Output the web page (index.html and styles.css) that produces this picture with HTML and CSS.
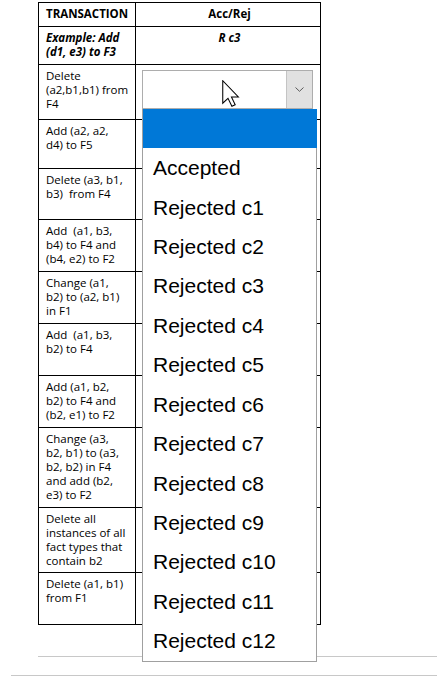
FILE: index.html
```html
<!DOCTYPE html>
<html>
<head>
<meta charset="utf-8">
<link rel="stylesheet" href="styles.css">
</head>
<body>
<div class="page">
  <table class="grid">
    <colgroup><col class="c1"><col class="c2"></colgroup>
    <tr class="r-head"><th class="tl">TRANSACTION</th><th>Acc/Rej</th></tr>
    <tr class="r-ex"><td class="ex">Example: Add<br>(d1, e3) to F3</td><td class="ex center">R c3</td></tr>
    <tr class="r1"><td>Delete<br>(a2,b1,b1) from<br>F4</td><td></td></tr>
    <tr class="r2"><td>Add (a2, a2,<br>d4) to F5</td><td></td></tr>
    <tr class="r3"><td>Delete (a3, b1,<br>b3)&nbsp; from F4</td><td></td></tr>
    <tr class="r4"><td>Add&nbsp; (a1, b3,<br>b4) to F4 and<br>(b4, e2) to F2</td><td></td></tr>
    <tr class="r5"><td>Change (a1,<br>b2) to (a2, b1)<br>in F1</td><td></td></tr>
    <tr class="r6"><td>Add&nbsp; (a1, b3,<br>b2) to F4</td><td></td></tr>
    <tr class="r7"><td>Add (a1, b2,<br>b2) to F4 and<br>(b2, e1) to F2</td><td></td></tr>
    <tr class="r8"><td>Change (a3,<br>b2, b1) to (a3,<br>b2, b2) in F4<br>and add (b2,<br>e3) to F2</td><td></td></tr>
    <tr class="r9"><td>Delete all<br>instances of all<br>fact types that<br>contain b2</td><td></td></tr>
    <tr class="r10"><td>Delete (a1, b1)<br>from F1</td><td></td></tr>
  </table>
  <div class="rule rule-a"></div>
  <div class="rule rule-b"></div>

  <div class="select">
    <div class="select-btn">
      <svg width="9" height="5" viewBox="0 0 9 5"><path d="M0.5 0.5 L4.5 4.3 L8.5 0.5" fill="none" stroke="#5a5a5a" stroke-width="1"/></svg>
    </div>
  </div>

  <ul class="dropdown">
    <li class="sel"></li>
    <li>Accepted</li>
    <li>Rejected c1</li>
    <li>Rejected c2</li>
    <li>Rejected c3</li>
    <li>Rejected c4</li>
    <li>Rejected c5</li>
    <li>Rejected c6</li>
    <li>Rejected c7</li>
    <li>Rejected c8</li>
    <li>Rejected c9</li>
    <li>Rejected c10</li>
    <li>Rejected c11</li>
    <li>Rejected c12</li>
  </ul>

  <svg class="cursor" width="18" height="27" viewBox="0 0 12 18">
    <path d="M0.5 0.5 L0.5 15.5 L4 12.2 L6.6 17.5 L8.8 16.5 L6.3 11.3 L10.9 11.3 Z" fill="#fff" stroke="#000" stroke-width="0.7" stroke-linejoin="miter"/>
  </svg>
</div>
</body>
</html>
```

FILE: styles.css
```css
html, body {
  margin: 0;
  padding: 0;
  background: #fff;
}
.page {
  position: relative;
  width: 437px;
  height: 676px;
  overflow: hidden;
  font-family: "Open Sans", "DejaVu Sans", sans-serif;
  color: #000;
}
.grid {
  border-collapse: collapse;
  table-layout: fixed;
  width: 282px;
  margin: 2px 0 0 38px;
  font-size: 11.5px;
  line-height: 14px;
}
.c1 { width: 97px; }
.c2 { width: 185px; }
.grid th, .grid td {
  border: 1px solid #000;
  padding: 4px 4px 4px 7px;
  vertical-align: top;
  text-align: left;
  font-weight: normal;
  white-space: nowrap;
}
.grid th {
  font-weight: bold;
  text-align: center;
}
.grid th.tl { text-align: left; }
.grid td.ex {
  font-weight: bold;
  font-style: italic;
}
.grid td.center { text-align: center; }

.r-head th { height: 15px; }
.r-ex td { height: 29px; }
.r1 td { height: 46px; }
.r2 td { height: 40px; }
.r3 td { height: 42px; }
.r4 td, .r5 td, .r6 td, .r7 td, .r10 td { height: 43px; }
.r8 td { height: 71px; }
.r9 td { height: 56px; }

.rule {
  height: 1px;
  background: #c8c8c8;
}
.rule-a { margin: 31px 0 0 38px; }
.rule-b { margin: 18px 0 0 11px; }

.select {
  position: absolute;
  left: 142px;
  top: 70px;
  width: 171px;
  height: 39px;
  box-sizing: border-box;
  border: 1px solid #adadad;
  background: #fff;
  display: flex;
  justify-content: flex-end;
}
.select-btn {
  width: 25px;
  background: #e1e1e1;
  border-left: 1px solid #c4c4c4;
  display: flex;
  align-items: center;
  justify-content: center;
}

.dropdown {
  position: absolute;
  left: 142px;
  top: 109px;
  width: 175px;
  height: 553px;
  box-sizing: border-box;
  margin: 0;
  padding: 0;
  list-style: none;
  background: #fff;
  border: 1px solid #a0a0a0;
  border-top: none;
  display: flex;
  flex-direction: column;
  font-family: "Liberation Sans", Arial, sans-serif;
  font-size: 21px;
  color: #000;
}
.dropdown li {
  flex: 1;
  display: flex;
  align-items: center;
  padding-left: 10px;
}
.dropdown li.sel {
  background: #0078d7;
  margin: 0 -1px 0 0;
}

.cursor {
  position: absolute;
  left: 222px;
  top: 80px;
}
```
